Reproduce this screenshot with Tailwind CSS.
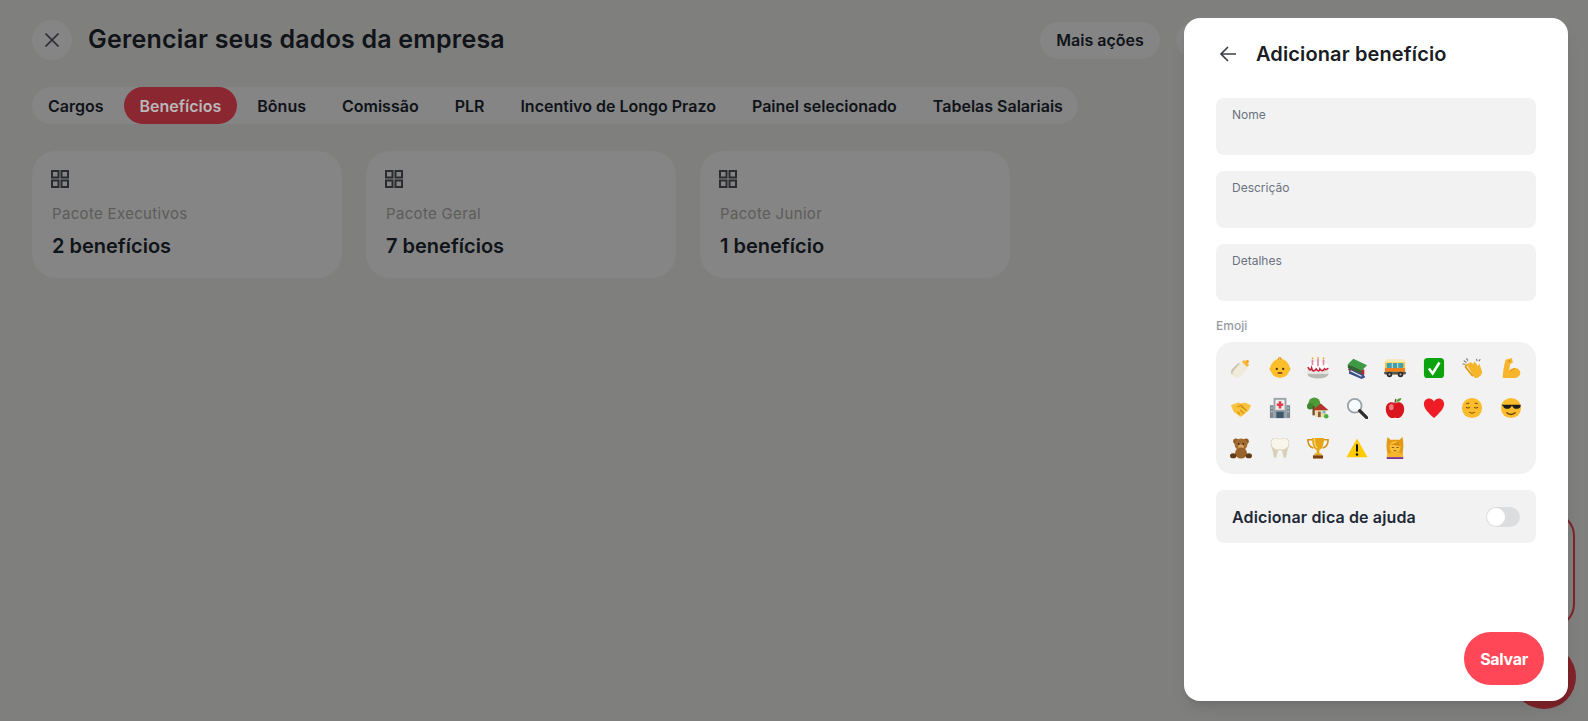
<!DOCTYPE html>
<html lang="pt-BR"><head><meta charset="utf-8"><title>Adicionar benefício</title>
<script src="https://cdn.jsdelivr.net/npm/@tailwindcss/browser@4"></script></head>
<body class="m-0 h-[721px] w-[1588px] overflow-hidden bg-[#7f7f7d] font-['Inter','Liberation_Sans',sans-serif] text-[#101318]">
<div class="relative h-[721px] w-[1588px] overflow-hidden">
<main class="flex flex-col px-8 pt-5">
 <header class="flex h-10 items-center">
  <button class="flex size-10 items-center justify-center rounded-full bg-[#858585]"><svg class="size-5" viewBox="0 0 20 20" fill="none" stroke="#2a2c30" stroke-width="1.700"><path d="M3.500 3.500l13 13M16.500 3.500l-13 13"/></svg></button>
  <h1 class="ml-4 text-[25px] font-semibold tracking-[0.2px]">Gerenciar seus dados da empresa</h1>
  <div class="ml-auto flex gap-4">
   <div class="flex h-[37px] w-[120px] items-center justify-center rounded-full bg-[#858585] text-[16px] font-semibold">Mais ações</div>
   <div class="h-[37px] w-[380px] rounded-full bg-[#858585]"></div>
  </div>
 </header>
 <nav class="mt-[27px] flex h-[37px] w-[1046px] items-center gap-1 rounded-full bg-[#858585] text-[16px] font-semibold whitespace-nowrap">
  <span class="flex h-[37px] items-center px-4">Cargos</span>
  <span class="flex h-[37px] items-center rounded-full bg-[#8a2730] px-4 text-[#b8b8b8]">Benefícios</span>
  <span class="flex h-[37px] items-center px-4">Bônus</span>
  <span class="flex h-[37px] items-center px-4">Comissão</span>
  <span class="flex h-[37px] items-center px-4">PLR</span>
  <span class="flex h-[37px] items-center px-4">Incentivo de Longo Prazo</span>
  <span class="flex h-[37px] items-center px-4">Painel selecionado</span>
  <span class="flex h-[37px] items-center px-4">Tabelas Salariais</span>
 </nav>
 <section class="mt-[27px] flex gap-6">
  <article class="h-[127px] w-[310px] rounded-3xl bg-[#858585] px-5 pt-[19px]">
   <svg class="-ml-px size-[18px]" viewBox="0 0 18 18" fill="none" stroke="#2a2c30" stroke-width="2"><rect x="1" y="1" width="6.500" height="6.500"/><rect x="10.500" y="1" width="6.500" height="6.500"/><rect x="1" y="10.500" width="6.500" height="6.500"/><rect x="10.500" y="10.500" width="6.500" height="6.500"/></svg>
   <p class="mt-4 text-[15px] leading-5 tracking-[0.33px] text-[#5c5c5a]">Pacote Executivos</p>
   <p class="mt-[8px] text-[20px] leading-7 font-semibold">2 benefícios</p>
  </article>
  <article class="h-[127px] w-[310px] rounded-3xl bg-[#858585] px-5 pt-[19px]">
   <svg class="-ml-px size-[18px]" viewBox="0 0 18 18" fill="none" stroke="#2a2c30" stroke-width="2"><rect x="1" y="1" width="6.500" height="6.500"/><rect x="10.500" y="1" width="6.500" height="6.500"/><rect x="1" y="10.500" width="6.500" height="6.500"/><rect x="10.500" y="10.500" width="6.500" height="6.500"/></svg>
   <p class="mt-4 text-[15px] leading-5 tracking-[0.33px] text-[#5c5c5a]">Pacote Geral</p>
   <p class="mt-[8px] text-[20px] leading-7 font-semibold">7 benefícios</p>
  </article>
  <article class="h-[127px] w-[310px] rounded-3xl bg-[#858585] px-5 pt-[19px]">
   <svg class="-ml-px size-[18px]" viewBox="0 0 18 18" fill="none" stroke="#2a2c30" stroke-width="2"><rect x="1" y="1" width="6.500" height="6.500"/><rect x="10.500" y="1" width="6.500" height="6.500"/><rect x="1" y="10.500" width="6.500" height="6.500"/><rect x="10.500" y="10.500" width="6.500" height="6.500"/></svg>
   <p class="mt-4 text-[15px] leading-5 tracking-[0.33px] text-[#5c5c5a]">Pacote Junior</p>
   <p class="mt-[8px] text-[20px] leading-7 font-semibold">1 benefício</p>
  </article>
 </section>
</main>

<div class="absolute top-[512px] right-[13px] h-[116px] w-[200px] rounded-3xl border-2 border-[#7f2329]"></div>
<div class="absolute right-[12px] bottom-[12px] size-16 rounded-full bg-[#7f2329]"></div>

<aside class="absolute top-[18px] left-[1184px] flex h-[683px] w-[384px] flex-col rounded-2xl bg-white px-8 pt-[18px] pb-4 shadow-lg">
 <div class="flex h-9 items-center">
  <svg class="ml-[3px] size-[18px]" viewBox="0 0 18 18" fill="none" stroke="#3b4048" stroke-width="1.700"><path d="M17 9H2M9 2L2 9l7 7"/></svg>
  <h2 class="ml-[19px] text-[20px] font-semibold tracking-[0.12px] text-[#1a1d23]">Adicionar benefício</h2>
 </div>
 <div class="mt-[26px] flex flex-col gap-4">
  <div class="h-[57px] rounded-lg bg-[#f2f2f3] px-4 pt-[9px] text-[12px] leading-4 text-[#6b7280]">Nome</div>
  <div class="h-[57px] rounded-lg bg-[#f2f2f3] px-4 pt-[9px] text-[12px] leading-4 text-[#6b7280]">Descrição</div>
  <div class="h-[57px] rounded-lg bg-[#f2f2f3] px-4 pt-[9px] text-[12px] leading-4 text-[#6b7280]">Detalhes</div>
 </div>
 <p class="mt-[17px] text-[12px] leading-4 font-medium text-[#969ba3]">Emoji</p>
 <div class="mt-2 grid h-[132px] grid-cols-8 grid-rows-3 rounded-2xl bg-[#f2f2f3] p-1.5 [&>*]:m-auto [&>*]:size-[22px]">
  <svg viewBox="0 0 24 24"><g transform="rotate(45 12 12)"><rect x="6" y="6" width="12" height="18" rx="4.500" fill="#efeadb"/><path d="M6 10v9.500C6 22 8 24 10.500 24H12c-3 0-4-3-4-14z" fill="#c9c4b0"/><rect x="8" y="3.500" width="8" height="3" fill="#f7b52c"/><path d="M10 3.500c0-4 4-4 4 0z" fill="#f7a01c"/></g></svg>
  <svg viewBox="0 0 24 24"><circle cx="2.800" cy="13" r="2.200" fill="#f5a623"/><circle cx="21.200" cy="13" r="2.200" fill="#f5a623"/><circle cx="12" cy="12.500" r="10.500" fill="#fbbf2d"/><path d="M10 3c0-3 4-3 3 0" fill="none" stroke="#e8960f" stroke-width="1.400"/><circle cx="8.500" cy="13" r="1.200" fill="#4b2c0f"/><circle cx="15.500" cy="13" r="1.200" fill="#4b2c0f"/><path d="M10 17.500h4" stroke="#7a3b0c" stroke-width="1.600" stroke-linecap="round"/></svg>
  <svg viewBox="0 0 24 24"><ellipse cx="12" cy="18.500" rx="11.500" ry="5" fill="#b9b9b4"/><rect x=".5" y="10" width="23" height="8.500" fill="#e6e5df"/><ellipse cx="12" cy="10" rx="11.500" ry="4.500" fill="#fff"/><path d="M1 11c2 4 3 4 4 1 1 4 3 4 5 1 2 3 3 3 4 0 2 3 4 2 5 0 1 1 3 1 4-1" stroke="#c4213a" stroke-width="1.800" fill="none"/><path d="M6 9V3M12 10V2M18 9V3" stroke="#d98aa0" stroke-width="1.800"/><path d="M6 2.500v-2M12 1.500V0M18 2.500v-2" stroke="#f59e0b" stroke-width="1.500"/></svg>
  <svg viewBox="0 0 24 24"><path d="M2 14l15 7 3-2v-5L6 8z" fill="#b9293a"/><path d="M3 18l14 6 4-2-2-3-15-6z" fill="#3a4f8a"/><path d="M2 8l6-6 15 7-6 6z" fill="#3f9a45"/><path d="M2 8l15 7v3L2 12z" fill="#2b6a30"/><path d="M5 15l12 6" stroke="#eee" stroke-width="1.300"/></svg>
  <svg viewBox="0 0 24 24"><rect x="1" y="3" width="22" height="16" rx="3" fill="#f7c83b"/><rect x="1" y="12" width="22" height="4" fill="#f2811d"/><rect x="1" y="3" width="22" height="3" rx="1.500" fill="#fbeab0"/><rect x="3" y="6.500" width="18" height="5.500" rx="1" fill="#3f9fb3"/><path d="M9 6.500V12M15 6.500V12" stroke="#fbeab0"/><rect x="0" y="16" width="24" height="3" rx="1.500" fill="#555"/><circle cx="6" cy="19" r="3" fill="#2b2b2b"/><circle cx="18" cy="19" r="3" fill="#2b2b2b"/><circle cx="6" cy="19" r="1.200" fill="#aaa"/><circle cx="18" cy="19" r="1.200" fill="#aaa"/></svg>
  <svg viewBox="0 0 24 24"><rect x="1" y="1" width="22" height="22" rx="4" fill="#0da30d"/><path d="M6.500 12.500l4 5.500L18 6" fill="none" stroke="#fff" stroke-width="2.800"/></svg>
  <svg viewBox="0 0 24 24"><path d="M6 8l9 15c4 0 8-3 8-7l-3-9-1.500 3L15 5 13 7.500 10.500 5.500 9 6.500z" fill="#f5b52b"/><path d="M6 8l-1 3 8 10" fill="none" stroke="#e29b12" stroke-width="2"/><path d="M3 4l3 2M6 1.500L7.500 4M17 2l.5 2.500M21 2.500l-1.500 2M1.500 7.500l3 .5" stroke="#6b6b6b" stroke-width="1.100"/></svg>
  <svg viewBox="0 0 24 24"><path d="M6 3l7-2 1 5-3 2-1 7c3-4 10-4 12 1 1 4-3 7-7 7H3c0-6 1-12 3-20z" fill="#f7b52c"/><path d="M9 5l2-1" stroke="#c97f0c" stroke-width="1.300"/><path d="M11 16c1-2 3-3 5-3" stroke="#d68f15" fill="none"/></svg>
  <svg viewBox="0 0 24 24"><path d="M1 9l8-3 3 1 4-1 7 3-3 6-7 6c-2 1-3 0-4-1l-5-4z" fill="#f8c33c"/><path d="M8 11l4-2 6 6M8 16l3 3M11 14l4 4M14 12l-2-2" fill="none" stroke="#d48c10" stroke-width="1.200"/></svg>
  <svg viewBox="0 0 24 24"><rect x="5" y="1" width="14" height="22" fill="#9aa2a6"/><rect x="1" y="9" width="4" height="14" fill="#7f898e"/><rect x="19" y="9" width="4" height="14" fill="#7f898e"/><rect x="7" y="3" width="10" height="11" fill="#eef0f0"/><path d="M12 4.500v8M8.500 8.500h7" stroke="#e6394a" stroke-width="2.800"/><rect x="8" y="16" width="8" height="7" fill="#3c5a6b"/><path d="M2 12h2M2 16h2M20 12h2M20 16h2" stroke="#dde"/></svg>
  <svg viewBox="0 0 24 24"><circle cx="8" cy="7" r="6.500" fill="#4f9a38"/><circle cx="3.500" cy="10" r="3.500" fill="#3e8530"/><rect x="6" y="10" width="2.500" height="10" fill="#6f4a24"/><path d="M9 22V13h12v9z" fill="#f0d9a8"/><path d="M6.500 14.500L15 7l8.500 7.500z" fill="#b0342a"/><rect x="12" y="16" width="3" height="6" fill="#865b36"/><rect x="17" y="15" width="3" height="3" fill="#6fb6d6"/><circle cx="21" cy="21" r="2.500" fill="#4caf3f"/></svg>
  <svg viewBox="0 0 24 24"><circle cx="9.500" cy="9.500" r="7.500" fill="#f6fbff" stroke="#9aa2aa" stroke-width="2"/><path d="M15 15l7.500 7.500" stroke="#2e2e2e" stroke-width="3.500" stroke-linecap="round"/></svg>
  <svg viewBox="0 0 24 24"><path d="M12 7C8 4 2 6 2 13c0 6 4 10 7 10 1.500 0 2-.5 3-.5s1.500.5 3 .5c3 0 7-4 7-10 0-7-6-9-10-6z" fill="#d9151f"/><ellipse cx="8" cy="11" rx="2.500" ry="3.500" fill="#f47a7f"/><path d="M12 7c0-2 .5-3 1-5" stroke="#6a4522" stroke-width="1.300" fill="none"/><path d="M13 5c1-3 4-4 6-4-.5 3-3 5-6 4z" fill="#4ca32f"/></svg>
  <svg viewBox="0 0 24 24"><path d="M12 23C6 17 1 13 1 7.500 1 4 3.500 1.500 6.500 1.500c2.500 0 4.300 1.300 5.500 3.500 1.200-2.200 3-3.500 5.500-3.500C20.500 1.500 23 4 23 7.500 23 13 18 17 12 23z" fill="#ee1c25"/></svg>
  <svg viewBox="0 0 24 24"><circle cx="12" cy="12" r="11" fill="#fbbc2c"/><path d="M5.500 11c1 1.200 3 1.200 4 0M14.500 11c1 1.200 3 1.200 4 0M9 16.500c2 1.500 4 1.500 6 0M5.500 7.500l3.500-1M18.500 7.500l-3.500-1" fill="none" stroke="#7a4a0e" stroke-width="1.100"/></svg>
  <svg viewBox="0 0 24 24"><circle cx="12" cy="12" r="11" fill="#fbbc2c"/><path d="M1.500 8.500h21V10c-1 3.500-7 4-8.500.5-.7-1-1.300-1-2 0-1.500 3.500-7.500 3-8.500-.5z" fill="#1d1d1f"/><path d="M7 17c3 2.500 7 2.500 10 0" fill="none" stroke="#6a3d0a" stroke-width="1.500"/></svg>
  <svg viewBox="0 0 24 24"><circle cx="6.500" cy="4.500" r="3" fill="#8b5a26"/><circle cx="17.500" cy="4.500" r="3" fill="#8b5a26"/><ellipse cx="12" cy="8" rx="7" ry="6.500" fill="#a56c30"/><ellipse cx="12" cy="10.500" rx="3" ry="2.200" fill="#d9a566"/><circle cx="9.500" cy="7.500" r=".9" fill="#221"/><circle cx="14.500" cy="7.500" r=".9" fill="#221"/><ellipse cx="12" cy="17.500" rx="6.500" ry="6" fill="#99622a"/><ellipse cx="3.500" cy="20.500" rx="3.500" ry="2.800" fill="#5f3b16"/><ellipse cx="20.500" cy="20.500" rx="3.500" ry="2.800" fill="#5f3b16"/></svg>
  <svg viewBox="0 0 24 24"><path d="M7 1c2 0 3 1 5 1s3-1 5-1c4 0 6 3 5 8-1 3-2 5-2.500 9-.3 3-1 5-2.500 5-2 0-1.500-9-5-9s-3 9-5 9c-1.500 0-2.200-2-2.500-5C4 14 3 12 2 9 1 4 3 1 7 1z" fill="#d8d0b8"/><path d="M7 1.500c2 0 3 1 5 1s3-1 5-1c3 0 5 2.500 4.300 7-1 3-3.300 5-6.300 5-1.500 0-2-.5-3-.5s-1.500.5-3 .5c-3 0-5.300-2-6.300-5C2 4 4 1.500 7 1.500z" fill="#f8f5ea"/></svg>
  <svg viewBox="0 0 24 24"><path d="M6 3H1c0 5 2 8 6 9M18 3h5c0 5-2 8-6 9" fill="none" stroke="#d59413" stroke-width="1.800"/><path d="M5.500 1h13c0 8-2 12-5 13v4H16v2H8v-2h2.500v-4c-3-1-5-5-5-13z" fill="#e5a517"/><path d="M8 1c0 6 1 9 3 11" fill="none" stroke="#f7d566" stroke-width="1.500"/><rect x="6.500" y="20" width="11" height="3.500" fill="#7b3f0e"/></svg>
  <svg viewBox="0 0 24 24"><path d="M12 1.500L23.500 22H.5z" fill="#fecb00"/><path d="M12 8v8" stroke="#111" stroke-width="2.200"/><circle cx="12" cy="19" r="1.400" fill="#111"/></svg>
  <svg viewBox="0 0 24 24"><path d="M3 22c0-5 3-7 9-7s9 2 9 7z" fill="#f5b52b"/><path d="M3 22h18v2H3z" fill="#7a2f91"/><path d="M4 19C2 11 3 3 4 0l3 3h10l3-3c1 3 2 11 0 19l-3-2H7z" fill="#e59a16"/><ellipse cx="12" cy="11" rx="6" ry="6.500" fill="#f9c13a"/><path d="M6.500 8c3 0 6-1 8.500-3 1 1 2.500 2 2.500 5-4-1-7-1-11-2z" fill="#d98c12"/><path d="M8.500 11.500H11M13.500 11.500H16M10.500 15h3" stroke="#7a4a0e"/></svg>
 </div>
 <div class="mt-4 flex h-[53px] items-center justify-between rounded-lg bg-[#f2f2f3] px-4 text-[16px] font-semibold tracking-[0.13px] text-[#1f2937]">
  <span>Adicionar dica de ajuda</span>
  <span class="flex h-5 w-[34px] items-center rounded-full bg-[#dcddde] pl-px"><span class="size-[18px] rounded-full bg-white"></span></span>
 </div>
 <button class="mt-auto -mr-2 flex h-[53px] w-20 items-center justify-center self-end rounded-full bg-[#ff4757] text-[16px] font-bold tracking-[-0.3px] text-white">Salvar</button>
</aside>
</div>
</body></html>
